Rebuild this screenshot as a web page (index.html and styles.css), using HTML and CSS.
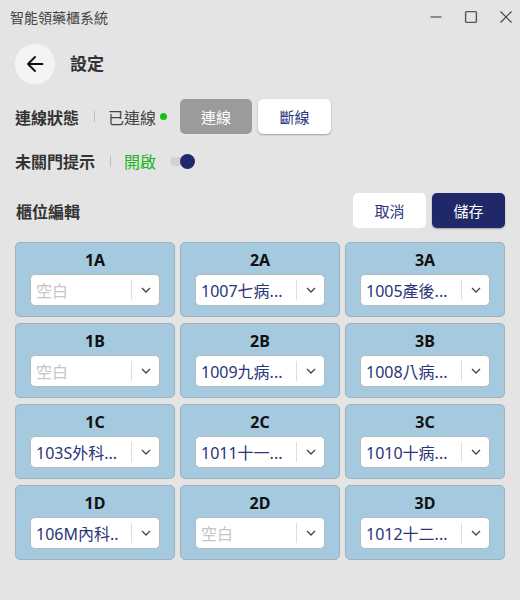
FILE: index.html
```html
<!DOCTYPE html>
<html lang="zh-Hant">
<head>
<meta charset="utf-8">
<title>智能領藥櫃系統</title>
<link rel="stylesheet" href="styles.css">
</head>
<body>
<div class="titlebar">
  <span class="app-title">智能領藥櫃系統</span>
  <div class="win-controls">
    <svg class="win-btn" viewBox="0 0 14 14" width="14" height="14"><line x1="1.5" y1="7" x2="12.5" y2="7" stroke="#666" stroke-width="1.4"/></svg>
    <svg class="win-btn" viewBox="0 0 14 14" width="14" height="14"><rect x="1.6" y="1.6" width="10.8" height="10.8" rx="1" fill="none" stroke="#555" stroke-width="1.4"/></svg>
    <svg class="win-btn" viewBox="0 0 14 14" width="14" height="14"><path d="M1.5 1.5 L12.5 12.5 M12.5 1.5 L1.5 12.5" stroke="#444" stroke-width="1.2" fill="none"/></svg>
  </div>
</div>

<main class="page">
  <div class="header">
    <button class="back-btn" aria-label="返回">
      <svg viewBox="0 0 18 18" width="18" height="18"><path d="M16.5 9 H2 M9 2 L2 9 L9 16" stroke="#111" stroke-width="1.9" fill="none" stroke-linecap="round" stroke-linejoin="round"/></svg>
    </button>
    <h1 class="page-title">設定</h1>
  </div>

  <div class="setting-row status-row">
    <span class="setting-label">連線狀態</span>
    <span class="sep"></span>
    <span class="status-text">已連線</span>
    <span class="dot"></span>
    <div class="btn-pair">
      <button class="btn btn-disabled">連線</button>
      <button class="btn btn-light">斷線</button>
    </div>
  </div>

  <div class="setting-row toggle-row">
    <span class="setting-label">未關門提示</span>
    <span class="sep"></span>
    <span class="on-text">開啟</span>
    <span class="switch"><span class="knob"></span></span>
  </div>

  <div class="section-head">
    <span class="section-title">櫃位編輯</span>
    <div class="btn-pair">
      <button class="btn btn-white">取消</button>
      <button class="btn btn-primary">儲存</button>
    </div>
  </div>

  <div class="grid">
    <div class="cell"><div class="cell-name">1A</div><div class="select"><span class="val empty">空白</span><span class="arrow"><svg viewBox="0 0 10 6" width="10" height="6"><path d="M1 1 L5 5 L9 1" stroke="#444" stroke-width="1.3" fill="none"/></svg></span></div></div>
    <div class="cell"><div class="cell-name">2A</div><div class="select"><span class="val">1007七病...</span><span class="arrow"><svg viewBox="0 0 10 6" width="10" height="6"><path d="M1 1 L5 5 L9 1" stroke="#444" stroke-width="1.3" fill="none"/></svg></span></div></div>
    <div class="cell"><div class="cell-name">3A</div><div class="select"><span class="val">1005產後...</span><span class="arrow"><svg viewBox="0 0 10 6" width="10" height="6"><path d="M1 1 L5 5 L9 1" stroke="#444" stroke-width="1.3" fill="none"/></svg></span></div></div>

    <div class="cell"><div class="cell-name">1B</div><div class="select"><span class="val empty">空白</span><span class="arrow"><svg viewBox="0 0 10 6" width="10" height="6"><path d="M1 1 L5 5 L9 1" stroke="#444" stroke-width="1.3" fill="none"/></svg></span></div></div>
    <div class="cell"><div class="cell-name">2B</div><div class="select"><span class="val">1009九病...</span><span class="arrow"><svg viewBox="0 0 10 6" width="10" height="6"><path d="M1 1 L5 5 L9 1" stroke="#444" stroke-width="1.3" fill="none"/></svg></span></div></div>
    <div class="cell"><div class="cell-name">3B</div><div class="select"><span class="val">1008八病...</span><span class="arrow"><svg viewBox="0 0 10 6" width="10" height="6"><path d="M1 1 L5 5 L9 1" stroke="#444" stroke-width="1.3" fill="none"/></svg></span></div></div>

    <div class="cell"><div class="cell-name">1C</div><div class="select"><span class="val">103S外科...</span><span class="arrow"><svg viewBox="0 0 10 6" width="10" height="6"><path d="M1 1 L5 5 L9 1" stroke="#444" stroke-width="1.3" fill="none"/></svg></span></div></div>
    <div class="cell"><div class="cell-name">2C</div><div class="select"><span class="val">1011十一...</span><span class="arrow"><svg viewBox="0 0 10 6" width="10" height="6"><path d="M1 1 L5 5 L9 1" stroke="#444" stroke-width="1.3" fill="none"/></svg></span></div></div>
    <div class="cell"><div class="cell-name">3C</div><div class="select"><span class="val">1010十病...</span><span class="arrow"><svg viewBox="0 0 10 6" width="10" height="6"><path d="M1 1 L5 5 L9 1" stroke="#444" stroke-width="1.3" fill="none"/></svg></span></div></div>

    <div class="cell"><div class="cell-name">1D</div><div class="select"><span class="val">106M內科..</span><span class="arrow"><svg viewBox="0 0 10 6" width="10" height="6"><path d="M1 1 L5 5 L9 1" stroke="#444" stroke-width="1.3" fill="none"/></svg></span></div></div>
    <div class="cell"><div class="cell-name">2D</div><div class="select"><span class="val empty">空白</span><span class="arrow"><svg viewBox="0 0 10 6" width="10" height="6"><path d="M1 1 L5 5 L9 1" stroke="#444" stroke-width="1.3" fill="none"/></svg></span></div></div>
    <div class="cell"><div class="cell-name">3D</div><div class="select"><span class="val">1012十二...</span><span class="arrow"><svg viewBox="0 0 10 6" width="10" height="6"><path d="M1 1 L5 5 L9 1" stroke="#444" stroke-width="1.3" fill="none"/></svg></span></div></div>
  </div>
</main>
</body>
</html>
```

FILE: styles.css
```css
* { box-sizing: border-box; }

html, body {
  margin: 0;
  padding: 0;
  background: #e4e4e4;
  font-family: "Noto Sans", "Noto Sans CJK TC", sans-serif;
  color: #333;
}

body {
  width: 520px;
  height: 600px;
  overflow: hidden;
}

.titlebar {
  height: 36px;
  display: flex;
  align-items: center;
  justify-content: space-between;
  padding: 0 7px 0 10px;
}

.app-title {
  font-size: 14px;
  color: #444;
  line-height: 20px;
}

.win-controls {
  display: flex;
  align-items: center;
  gap: 21px;
  margin-top: -2px;
}

.win-btn { display: block; }

.page {
  padding: 0 15px;
}

.header {
  display: flex;
  align-items: center;
  gap: 15px;
  margin-top: 8px;
}

.back-btn {
  width: 40px;
  height: 40px;
  border-radius: 50%;
  border: none;
  background: #f4f4f4;
  display: flex;
  align-items: center;
  justify-content: center;
  padding: 0;
}

.back-btn svg { display: block; }

.page-title {
  margin: 0;
  font-size: 17px;
  font-weight: 700;
  color: #333;
  line-height: 24px;
}

.setting-row {
  display: flex;
  align-items: center;
}

.status-row {
  margin-top: 15px;
  height: 35px;
}

.toggle-row {
  margin-top: 15px;
  height: 24px;
}

.setting-label {
  font-size: 16px;
  font-weight: 700;
  color: #333;
}

.sep {
  width: 1px;
  height: 11px;
  background: #bdbdbd;
  margin: 0 13px 0 15px;
}

.status-text {
  font-size: 16px;
  color: #444;
}

.dot {
  width: 7px;
  height: 7px;
  border-radius: 50%;
  background: #15c015;
  margin: 0 13px 0 4px;
}

.on-text {
  font-size: 16px;
  color: #1db41d;
}

.switch {
  position: relative;
  width: 24px;
  height: 9px;
  border-radius: 5px;
  background: #d2d2d2;
  margin-left: 14px;
}

.knob {
  position: absolute;
  right: -1px;
  top: -3px;
  width: 15px;
  height: 15px;
  border-radius: 50%;
  background: #1f2868;
}

.btn-pair {
  display: flex;
  gap: 6px;
}

.btn {
  width: 73px;
  height: 35px;
  border: none;
  border-radius: 5px;
  font-family: "Noto Sans", "Noto Sans CJK TC", sans-serif;
  font-size: 15px;
  padding: 0;
}

.btn-disabled {
  background: #9b9b9b;
  color: #fff;
  width: 72px;
}

.btn-light {
  background: #fff;
  color: #2b3580;
  box-shadow: 0 1px 2px rgba(0, 0, 0, 0.3);
}

.btn-white {
  background: #fff;
  color: #2b3580;
}

.btn-primary {
  background: #1f2868;
  color: #fff;
  box-shadow: 0 1px 2px rgba(0, 0, 0, 0.3);
}

.section-head {
  display: flex;
  align-items: center;
  justify-content: space-between;
  margin-top: 20px;
}

.section-title {
  font-size: 16px;
  font-weight: 700;
  color: #333;
  padding-left: 1px;
}

.grid {
  margin-top: 14px;
  display: grid;
  grid-template-columns: repeat(3, 160px);
  column-gap: 5px;
  row-gap: 6px;
}

.cell {
  height: 75px;
  background: #a5cadf;
  border: 1px solid #9db0bb;
  border-radius: 5px;
  padding: 7px 14px 0 14px;
}

.cell-name {
  text-align: center;
  font-size: 16px;
  font-weight: 700;
  color: #111;
  line-height: 20px;
  margin-bottom: 4px;
}

.select {
  height: 32px;
  background: #fff;
  border: 1px solid #b4bcc2;
  border-radius: 5px;
  display: flex;
  align-items: center;
  padding-left: 5px;
}

.val {
  font-size: 16px;
  color: #2b3478;
  white-space: nowrap;
}

.val.empty {
  color: #c6c6c6;
}

.arrow {
  margin-left: auto;
  width: 28px;
  height: 20px;
  border-left: 1px solid #dedede;
  display: flex;
  align-items: center;
  justify-content: center;
}

.arrow svg { display: block; }
```
